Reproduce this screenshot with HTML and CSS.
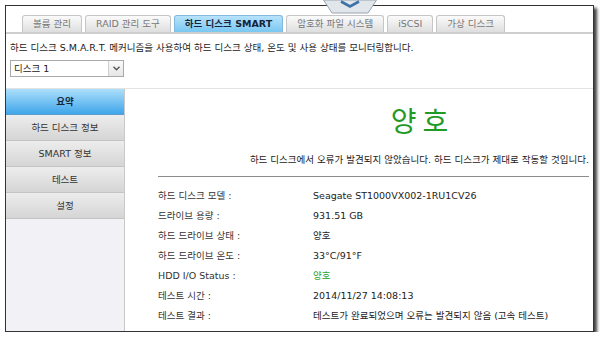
FILE: index.html
```html
<!DOCTYPE html>
<html>
<head>
    <meta charset="UTF-8" />
    <title>하드 디스크 SMART</title>
    <link rel="stylesheet" href="styles.css">
</head>
<body>
    <div class="frame">
        <!-- cut-off button peeking over the top edge -->
        <svg class="peek" width="54" height="14" viewBox="0 0 54 14">
            <polygon points="0.5,0 53.5,0 45,13 9,13" fill="#e1e6eb" stroke="#98a4b0" />
            <path d="M18 1.5 L27 6.5 L36 1.5" fill="none" stroke="#3f72a6" stroke-width="2.6" />
        </svg>

        <!-- tabs -->
        <ul class="tabs">
            <li>볼륨 관리</li>
            <li>RAID 관리 도구</li>
            <li class="active">하드 디스크 SMART</li>
            <li>암호화 파일 시스템</li>
            <li>iSCSI</li>
            <li>가상 디스크</li>
        </ul>

        <p class="intro">하드 디스크 S.M.A.R.T. 메커니즘을 사용하여 하드 디스크 상태, 온도 및 사용 상태를 모니터링합니다.</p>

        <div class="disk-select">
            <span class="disk-name">디스크 1</span>
            <span class="arrow">
                <svg width="7" height="5" viewBox="0 0 7 5"><path d="M0.5 0.8 L3.5 3.8 L6.5 0.8" fill="none" stroke="#555" stroke-width="1.4" /></svg>
            </span>
        </div>

        <div class="panel">
            <ul class="side-menu">
                <li class="active">요약</li>
                <li>하드 디스크 정보</li>
                <li>SMART 정보</li>
                <li>테스트</li>
                <li>설정</li>
            </ul>

            <div class="content">
                <div class="status">
                    <div class="status-title">양호</div>
                    <p class="status-msg">하드 디스크에서 오류가 발견되지 않았습니다. 하드 디스크가 제대로 작동할 것입니다.</p>
                </div>

                <table class="info">
                    <tr><td class="label">하드 디스크 모델 :</td><td>Seagate ST1000VX002-1RU1CV26</td></tr>
                    <tr><td class="label">드라이브 용량 :</td><td>931.51 GB</td></tr>
                    <tr><td class="label">하드 드라이브 상태 :</td><td>양호</td></tr>
                    <tr><td class="label">하드 드라이브 온도 :</td><td>33°C/91°F</td></tr>
                    <tr><td class="label">HDD I/O Status :</td><td class="good">양호</td></tr>
                    <tr><td class="label">테스트 시간 :</td><td>2014/11/27 14:08:13</td></tr>
                    <tr><td class="label">테스트 결과 :</td><td>테스트가 완료되었으며 오류는 발견되지 않음 (고속 테스트)</td></tr>
                </table>
            </div>
        </div>
    </div>
</body>
</html>
```

FILE: styles.css
```css
body {
    margin: 0;
    background-color: #ffffff;
    font-family: "DejaVu Sans", "Noto Sans CJK KR", sans-serif;
    font-size: 9.5px;
    color: #222222;
}

.frame {
    position: relative;
    display: flex;
    flex-direction: column;
    width: 587px;
    height: 325px;
    margin: 5px 0 0 5px;
    border: 1px solid #333333;
    box-shadow: 3px 3px 3px rgba(0, 0, 0, 0.75);
    background-color: #ffffff;
}

.peek {
    position: absolute;
    left: 317px;
    top: -6px;
}

/* tabs */
.tabs {
    display: flex;
    gap: 3px;
    margin: 0;
    padding: 9px 0 0 16px;
    list-style: none;
    border-bottom: 2px solid #cfcfcf;
}

.tabs li {
    height: 16px;
    line-height: 16px;
    padding: 0 10px;
    border: 1px solid #c6c6c6;
    border-bottom: none;
    border-radius: 3px 3px 0 0;
    background: linear-gradient(#fbfbfb, #dedede);
    color: #777777;
}

.tabs li.active {
    background: linear-gradient(#b8e3fb, #79c7f1);
    border-color: #82b9dc;
    color: #14243a;
    font-weight: bold;
}

.intro {
    margin: 7px 0 0 4px;
    line-height: 14px;
}

/* disk picker */
.disk-select {
    display: flex;
    width: 112px;
    height: 15px;
    margin: 5px 0 0 4px;
    border: 1px solid #a9a9a9;
    line-height: 15px;
}

.disk-name {
    flex: 1;
    padding-left: 3px;
}

.arrow {
    display: flex;
    align-items: center;
    justify-content: center;
    width: 14px;
    border-left: 1px solid #cfcfcf;
    background: linear-gradient(#fafafa, #e6e6e6);
}

/* main panel */
.panel {
    display: flex;
    flex: 1;
    margin-top: 11px;
    border-top: 1px solid #e3e3e3;
}

.side-menu {
    width: 118px;
    margin: 0;
    padding: 0;
    list-style: none;
    background-color: #f2f2f6;
    border-right: 1px solid #c9c9c9;
}

.side-menu li {
    height: 25px;
    line-height: 25px;
    text-align: center;
    border-bottom: 1px solid #c4c4c4;
    background: linear-gradient(#ededed, #d5d5d5);
    color: #333333;
}

.side-menu li.active {
    background: linear-gradient(#addffb, #3fa6ea);
    border-bottom-color: #5b9ccc;
    color: #15253a;
    font-weight: bold;
}

.content {
    flex: 1;
    padding: 0 4px 0 33px;
}

.status {
    width: fit-content;
    margin-left: auto;
    text-align: center;
}

.status-title {
    margin-top: 18px;
    padding-left: 6px;
    font-size: 28px;
    line-height: 32px;
    letter-spacing: 6px;
    color: #1f9a25;
}

.status-msg {
    margin: 14px 0 0;
    line-height: 14px;
}

.info {
    width: 100%;
    margin-top: 9px;
    padding-top: 8px;
    border-collapse: separate;
    border-spacing: 0;
    border-top: 1px solid #8c8c8c;
}

.info td {
    height: 20px;
    padding: 0;
}

.info td.label {
    width: 155px;
    color: #333333;
}

.info td.good {
    color: #2aa12f;
}
```
